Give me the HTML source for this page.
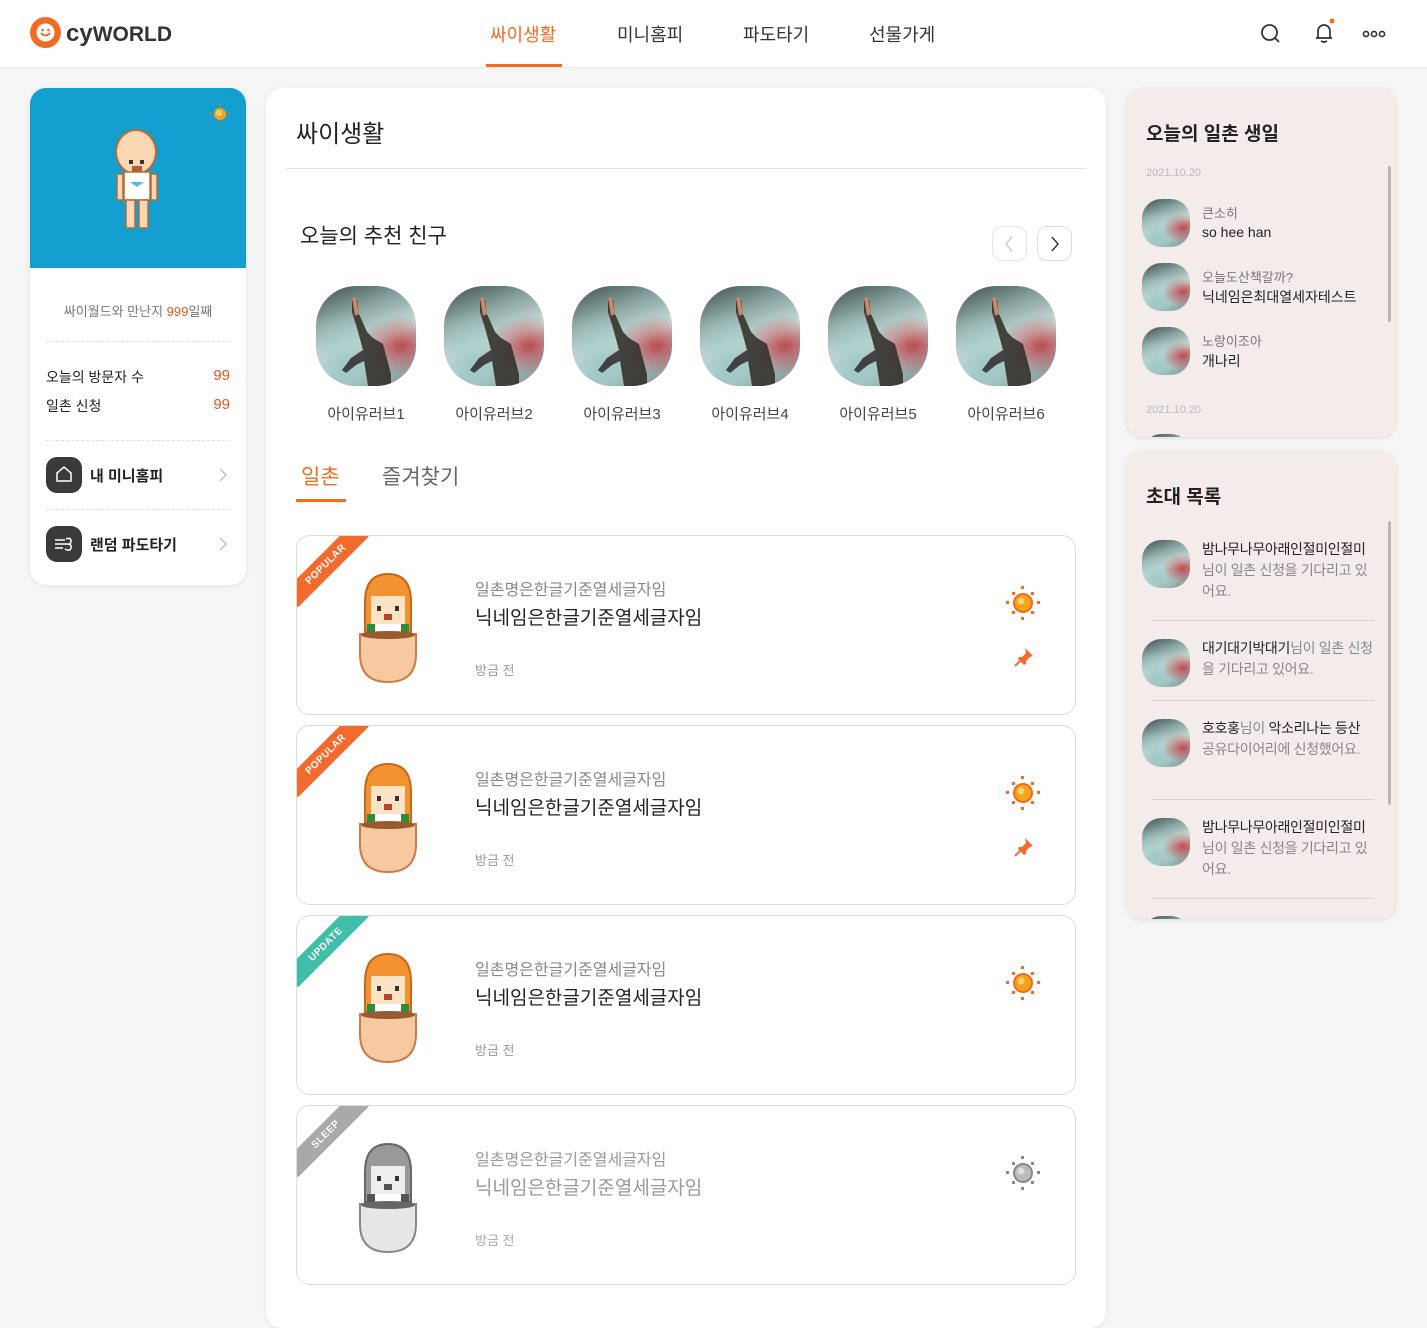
<!DOCTYPE html>
<html><head><meta charset="utf-8">
<style>
*{margin:0;padding:0;box-sizing:border-box}
body{width:1427px;height:1306px;overflow:hidden;background:#f5f5f5;font-family:"Liberation Sans","Noto Sans CJK KR",sans-serif;color:#222;position:relative}
.abs{position:absolute}
.hdr{position:absolute;left:0;top:0;width:1427px;height:68px;background:#fff;border-bottom:1px solid #ececec}
.nav{position:absolute;top:21px;font-size:18px;color:#333}
.card{position:absolute;background:#fff;border-radius:16px;box-shadow:0 1px 4px rgba(0,0,0,.08)}
.av{position:absolute;overflow:hidden;border-radius:40%;background:
 radial-gradient(ellipse at 85% 60%,rgba(190,30,40,.75) 0,rgba(190,30,40,0) 35%),
 radial-gradient(ellipse at 30% 80%,#9fc9c6 0,rgba(0,0,0,0) 50%),
 linear-gradient(160deg,#3d4c4c 0%,#8ea9a6 30%,#cfe1dd 55%,#aec6c2 75%,#6f8a8a 100%)}
.av svg{position:absolute;left:0;top:0;width:100%;height:100%}
.fn{position:absolute;top:403px;font-size:15px;color:#444;width:100px;text-align:center}
.item{position:absolute;left:296px;width:780px;height:180px;background:#fff;border:1px solid #dcdcdc;border-radius:14px;overflow:hidden}
.band{position:absolute;left:-21px;top:18px;width:100px;height:21px;transform:rotate(-45deg);color:#fff;font-size:10px;font-weight:bold;text-align:center;line-height:21px;letter-spacing:.5px}
.sub{position:absolute;left:178px;top:40px;font-size:16px;color:#888}
.ttl{position:absolute;left:178px;top:67px;font-size:19px;color:#222}
.tm{position:absolute;left:178px;top:124px;font-size:13px;color:#999}
.rc{position:absolute;left:1126px;width:270px;background:#f3ecea;border-radius:16px;box-shadow:0 1px 4px rgba(0,0,0,.1);overflow:hidden}
.sa{width:48px;height:48px}
.l1{position:absolute;font-size:13px;color:#777}
.l2{position:absolute;font-size:14px;color:#222}
.inv{position:absolute;left:76px;width:172px;font-size:14px;line-height:21px;color:#888;word-break:break-all;letter-spacing:-0.3px}
.inv b{font-weight:normal;color:#222}
.sep{position:absolute;left:26px;width:222px;height:1px;background:#d6d0ce}
.dash{position:absolute;left:16px;width:184px;border-top:1px dashed #ddd}
</style></head><body>

<div class="hdr">
 <svg class="abs" style="left:30px;top:17px" width="31" height="31" viewBox="0 0 31 31"><circle cx="15.5" cy="15.5" r="15.5" fill="#f26b21"/><circle cx="15.5" cy="15.5" r="9" fill="#fff"/><path d="M11 16q4.5 5 9 0" stroke="#f26b21" stroke-width="2" fill="none"/><circle cx="12.5" cy="13" r="1.3" fill="#f26b21"/><circle cx="18.5" cy="13" r="1.3" fill="#f26b21"/></svg>
 <div class="abs" style="left:66px;top:18px;font-size:24px;font-weight:bold;color:#333;line-height:32px">cy<span style="font-size:21px">WORLD</span></div>
 <div class="nav" style="left:490px;color:#f26b21">싸이생활</div>
 <div class="abs" style="left:486px;top:64px;width:76px;height:3px;background:#f26b21"></div>
 <div class="nav" style="left:617px">미니홈피</div>
 <div class="nav" style="left:743px">파도타기</div>
 <div class="nav" style="left:869px">선물가게</div>
 <svg class="abs" style="left:1259px;top:22px" width="24" height="24" viewBox="0 0 24 24" fill="none" stroke="#333" stroke-width="1.8"><circle cx="10.5" cy="10.5" r="7.5"/><path d="M16 16l4 4"/></svg>
 <svg class="abs" style="left:1310px;top:18px" width="28" height="28" viewBox="0 0 28 28" fill="none" stroke="#333" stroke-width="1.7"><path d="M6 20h16M8 20v-7a6 6 0 0112 0v7M11 23q3 2 6 0"/><circle cx="22" cy="3" r="2.5" fill="#f26b21" stroke="none"/></svg>
 <svg class="abs" style="left:1362px;top:30px" width="24" height="8" viewBox="0 0 24 8" fill="none" stroke="#333" stroke-width="1.6"><circle cx="4" cy="4" r="2.6"/><circle cx="12" cy="4" r="2.6"/><circle cx="20" cy="4" r="2.6"/></svg>
</div>

<!-- left card -->
<div class="card" style="left:30px;top:88px;width:216px;height:497px;overflow:hidden">
 <div class="abs" style="left:0;top:0;width:216px;height:180px;background:#139fcf"></div>
 <svg class="abs" style="left:180px;top:16px" width="20" height="20" viewBox="0 0 20 20"><rect x="9" y="0" width="2" height="2" fill="#f26b21"/><rect x="9" y="18" width="2" height="2" fill="#f26b21"/><rect x="0" y="9" width="2" height="2" fill="#f26b21"/><rect x="18" y="9" width="2" height="2" fill="#f26b21"/><circle cx="10" cy="10" r="6" fill="#f7a21b"/><circle cx="9" cy="9" r="3" fill="#fcd36b"/></svg>
 <svg class="abs" style="left:84px;top:40px" width="46" height="104" viewBox="0 0 46 104">
  <ellipse cx="22" cy="24" rx="20" ry="22" fill="#fcd7b3" stroke="#b56a3a" stroke-width="2"/>
  <rect x="15" y="32" width="4" height="4" fill="#333"/><rect x="26" y="32" width="4" height="4" fill="#333"/>
  <rect x="18" y="38" width="10" height="6" fill="#b55a3a"/>
  <rect x="10" y="44" width="26" height="28" fill="#fff" stroke="#b56a3a" stroke-width="1.5"/>
  <path d="M16 54h14l-7 5z" fill="#5bb6e6"/>
  <rect x="3" y="46" width="6" height="26" fill="#fcd7b3" stroke="#b56a3a" stroke-width="1.5"/>
  <rect x="37" y="46" width="6" height="26" fill="#fcd7b3" stroke="#b56a3a" stroke-width="1.5"/>
  <rect x="12" y="72" width="9" height="28" fill="#fcd7b3" stroke="#b56a3a" stroke-width="1.5"/>
  <rect x="25" y="72" width="9" height="28" fill="#fcd7b3" stroke="#b56a3a" stroke-width="1.5"/>
 </svg>
 <div class="abs" style="left:0;top:213px;width:216px;text-align:center;font-size:13px;color:#777">싸이월드와 만난지 <span style="color:#e8531c">999</span>일째</div>
 <div class="dash" style="top:253px"></div>
 <div class="abs" style="left:16px;top:279px;font-size:14px;color:#222">오늘의 방문자 수</div>
 <div class="abs" style="right:16px;top:279px;font-size:15px;color:#e8531c">99</div>
 <div class="abs" style="left:16px;top:308px;font-size:14px;color:#222">일촌 신청</div>
 <div class="abs" style="right:16px;top:308px;font-size:15px;color:#e8531c">99</div>
 <div class="dash" style="top:352px"></div>
 <div class="abs" style="left:16px;top:369px;width:36px;height:36px;border-radius:11px;background:#3a3a3a"></div>
 <svg class="abs" style="left:24px;top:376px" width="20" height="20" viewBox="0 0 20 20" fill="none" stroke="#fff" stroke-width="1.5"><path d="M3 9l7-6 7 6v8H3z" stroke-linejoin="round"/></svg>
 <div class="abs" style="left:60px;top:377px;font-size:15px;font-weight:bold;color:#222">내 미니홈피</div>
 <svg class="abs" style="left:188px;top:379px" width="10" height="16" viewBox="0 0 10 16" fill="none" stroke="#bbb" stroke-width="1.3"><path d="M2 2l6 6-6 6"/></svg>
 <div class="dash" style="top:421px"></div>
 <div class="abs" style="left:16px;top:438px;width:36px;height:36px;border-radius:11px;background:#3a3a3a"></div>
 <svg class="abs" style="left:23px;top:446px" width="22" height="20" viewBox="0 0 22 20" fill="none" stroke="#fff" stroke-width="1.5"><path d="M2 6h10M2 10h12M2 14h8M13 5q5-2 5 2t-4 3q5 0 4 4t-6 1"/></svg>
 <div class="abs" style="left:60px;top:446px;font-size:15px;font-weight:bold;color:#222">랜덤 파도타기</div>
 <svg class="abs" style="left:188px;top:448px" width="10" height="16" viewBox="0 0 10 16" fill="none" stroke="#bbb" stroke-width="1.3"><path d="M2 2l6 6-6 6"/></svg>
</div>

<!-- middle -->
<div class="card" style="left:266px;top:88px;width:840px;height:1240px"></div>
<div class="abs" style="left:296px;top:114px;font-size:24px;color:#222">싸이생활</div>
<div class="abs" style="left:286px;top:168px;width:800px;height:1px;background:#e2e2e2"></div>
<div class="abs" style="left:300px;top:220px;font-size:21px;color:#222">오늘의 추천 친구</div>
<div class="abs" style="left:992px;top:226px;width:35px;height:35px;border:1px solid #e5e5e5;border-radius:10px"></div>
<svg class="abs" style="left:1003px;top:236px" width="12" height="16" viewBox="0 0 12 16" fill="none" stroke="#ccc" stroke-width="1.4"><path d="M9 1L3 8l6 7"/></svg>
<div class="abs" style="left:1037px;top:226px;width:35px;height:35px;border:1px solid #ddd;border-radius:10px"></div>
<svg class="abs" style="left:1049px;top:236px" width="12" height="16" viewBox="0 0 12 16" fill="none" stroke="#333" stroke-width="1.4"><path d="M3 1l6 7-6 7"/></svg>

<div class="av" style="left:316px;top:286px;width:100px;height:100px"><svg viewBox="0 0 100 100"><path d="M36 12l5 2 2 14 8 18 6 6 10 6 8 30 0 12H52l-4-25-8 4-10 8-4-3 9-12 12-8-6-22-5-16z" fill="#2f2a26" opacity=".85"/><path d="M36 12l4 0 3 16-4 2z" fill="#c9886a"/></svg></div>
<div class="av" style="left:444px;top:286px;width:100px;height:100px"><svg viewBox="0 0 100 100"><path d="M36 12l5 2 2 14 8 18 6 6 10 6 8 30 0 12H52l-4-25-8 4-10 8-4-3 9-12 12-8-6-22-5-16z" fill="#2f2a26" opacity=".85"/><path d="M36 12l4 0 3 16-4 2z" fill="#c9886a"/></svg></div>
<div class="av" style="left:572px;top:286px;width:100px;height:100px"><svg viewBox="0 0 100 100"><path d="M36 12l5 2 2 14 8 18 6 6 10 6 8 30 0 12H52l-4-25-8 4-10 8-4-3 9-12 12-8-6-22-5-16z" fill="#2f2a26" opacity=".85"/><path d="M36 12l4 0 3 16-4 2z" fill="#c9886a"/></svg></div>
<div class="av" style="left:700px;top:286px;width:100px;height:100px"><svg viewBox="0 0 100 100"><path d="M36 12l5 2 2 14 8 18 6 6 10 6 8 30 0 12H52l-4-25-8 4-10 8-4-3 9-12 12-8-6-22-5-16z" fill="#2f2a26" opacity=".85"/><path d="M36 12l4 0 3 16-4 2z" fill="#c9886a"/></svg></div>
<div class="av" style="left:828px;top:286px;width:100px;height:100px"><svg viewBox="0 0 100 100"><path d="M36 12l5 2 2 14 8 18 6 6 10 6 8 30 0 12H52l-4-25-8 4-10 8-4-3 9-12 12-8-6-22-5-16z" fill="#2f2a26" opacity=".85"/><path d="M36 12l4 0 3 16-4 2z" fill="#c9886a"/></svg></div>
<div class="av" style="left:956px;top:286px;width:100px;height:100px"><svg viewBox="0 0 100 100"><path d="M36 12l5 2 2 14 8 18 6 6 10 6 8 30 0 12H52l-4-25-8 4-10 8-4-3 9-12 12-8-6-22-5-16z" fill="#2f2a26" opacity=".85"/><path d="M36 12l4 0 3 16-4 2z" fill="#c9886a"/></svg></div>
<div class="fn" style="left:316px">아이유러브1</div>
<div class="fn" style="left:444px">아이유러브2</div>
<div class="fn" style="left:572px">아이유러브3</div>
<div class="fn" style="left:700px">아이유러브4</div>
<div class="fn" style="left:828px">아이유러브5</div>
<div class="fn" style="left:956px">아이유러브6</div>

<div class="abs" style="left:301px;top:461px;font-size:21px;color:#f26b21">일촌</div>
<div class="abs" style="left:296px;top:499px;width:50px;height:3px;background:#f26b21"></div>
<div class="abs" style="left:382px;top:461px;font-size:21px;color:#666">즐겨찾기</div>

<!-- items -->
<div class="item" style="top:535px">
 <div class="band" style="background:#f26b2d">POPULAR</div>
 <svg class="abs" style="left:60px;top:36px" width="62" height="112" viewBox="0 0 62 112"><path d="M8 30q0-28 23-28t23 28v30H8z" fill="#f39231" stroke="#c9661e" stroke-width="2"/><rect x="14" y="24" width="34" height="30" fill="#fde3c6"/><rect x="20" y="34" width="4" height="5" fill="#333"/><rect x="38" y="34" width="4" height="5" fill="#333"/><rect x="27" y="42" width="8" height="6" fill="#b5452a"/><rect x="10" y="52" width="42" height="14" fill="#2e8b3a"/><rect x="18" y="52" width="26" height="14" fill="#fff"/><path d="M3 62h56v20q0 28-28 28T3 82z" fill="#f7c9a0" stroke="#d07a4a" stroke-width="2"/><ellipse cx="31" cy="63" rx="27" ry="4" fill="#9a5a30"/></svg>
 <div class="sub">일촌명은한글기준열세글자임</div><div class="ttl">닉네임은한글기준열세글자임</div><div class="tm">방금 전</div>
 <svg class="abs" style="left:708px;top:49px" width="36" height="36" viewBox="0 0 36 36"><rect x="16" y="1" width="3" height="3" fill="#f26b21"/><rect x="16" y="32" width="3" height="3" fill="#f26b21"/><rect x="1" y="16" width="3" height="3" fill="#f26b21"/><rect x="32" y="16" width="3" height="3" fill="#f26b21"/><rect x="7" y="7" width="3" height="3" fill="#f26b21"/><rect x="26" y="7" width="3" height="3" fill="#f26b21"/><rect x="7" y="26" width="3" height="3" fill="#f26b21"/><rect x="26" y="26" width="3" height="3" fill="#f26b21"/><circle cx="18" cy="18" r="9" fill="#f7a21b" stroke="#f26b21" stroke-width="2"/><circle cx="16" cy="16" r="3.5" fill="#fcd36b"/></svg>
 <svg class="abs" style="left:716px;top:110px" width="22" height="22" viewBox="0 0 22 22"><path d="M12 2l8 8-3 1-4 4 0 3-2 1-6-6 1-2 3 0 4-4z" fill="#f26b2d"/><path d="M7 15l-5 5" stroke="#f26b2d" stroke-width="2"/></svg>
</div>
<div class="item" style="top:725px">
 <div class="band" style="background:#f26b2d">POPULAR</div>
 <svg class="abs" style="left:60px;top:36px" width="62" height="112" viewBox="0 0 62 112"><path d="M8 30q0-28 23-28t23 28v30H8z" fill="#f39231" stroke="#c9661e" stroke-width="2"/><rect x="14" y="24" width="34" height="30" fill="#fde3c6"/><rect x="20" y="34" width="4" height="5" fill="#333"/><rect x="38" y="34" width="4" height="5" fill="#333"/><rect x="27" y="42" width="8" height="6" fill="#b5452a"/><rect x="10" y="52" width="42" height="14" fill="#2e8b3a"/><rect x="18" y="52" width="26" height="14" fill="#fff"/><path d="M3 62h56v20q0 28-28 28T3 82z" fill="#f7c9a0" stroke="#d07a4a" stroke-width="2"/><ellipse cx="31" cy="63" rx="27" ry="4" fill="#9a5a30"/></svg>
 <div class="sub">일촌명은한글기준열세글자임</div><div class="ttl">닉네임은한글기준열세글자임</div><div class="tm">방금 전</div>
 <svg class="abs" style="left:708px;top:49px" width="36" height="36" viewBox="0 0 36 36"><rect x="16" y="1" width="3" height="3" fill="#f26b21"/><rect x="16" y="32" width="3" height="3" fill="#f26b21"/><rect x="1" y="16" width="3" height="3" fill="#f26b21"/><rect x="32" y="16" width="3" height="3" fill="#f26b21"/><rect x="7" y="7" width="3" height="3" fill="#f26b21"/><rect x="26" y="7" width="3" height="3" fill="#f26b21"/><rect x="7" y="26" width="3" height="3" fill="#f26b21"/><rect x="26" y="26" width="3" height="3" fill="#f26b21"/><circle cx="18" cy="18" r="9" fill="#f7a21b" stroke="#f26b21" stroke-width="2"/><circle cx="16" cy="16" r="3.5" fill="#fcd36b"/></svg>
 <svg class="abs" style="left:716px;top:110px" width="22" height="22" viewBox="0 0 22 22"><path d="M12 2l8 8-3 1-4 4 0 3-2 1-6-6 1-2 3 0 4-4z" fill="#f26b2d"/><path d="M7 15l-5 5" stroke="#f26b2d" stroke-width="2"/></svg>
</div>
<div class="item" style="top:915px">
 <div class="band" style="background:#3fbfa8">UPDATE</div>
 <svg class="abs" style="left:60px;top:36px" width="62" height="112" viewBox="0 0 62 112"><path d="M8 30q0-28 23-28t23 28v30H8z" fill="#f39231" stroke="#c9661e" stroke-width="2"/><rect x="14" y="24" width="34" height="30" fill="#fde3c6"/><rect x="20" y="34" width="4" height="5" fill="#333"/><rect x="38" y="34" width="4" height="5" fill="#333"/><rect x="27" y="42" width="8" height="6" fill="#b5452a"/><rect x="10" y="52" width="42" height="14" fill="#2e8b3a"/><rect x="18" y="52" width="26" height="14" fill="#fff"/><path d="M3 62h56v20q0 28-28 28T3 82z" fill="#f7c9a0" stroke="#d07a4a" stroke-width="2"/><ellipse cx="31" cy="63" rx="27" ry="4" fill="#9a5a30"/></svg>
 <div class="sub">일촌명은한글기준열세글자임</div><div class="ttl">닉네임은한글기준열세글자임</div><div class="tm">방금 전</div>
 <svg class="abs" style="left:708px;top:49px" width="36" height="36" viewBox="0 0 36 36"><rect x="16" y="1" width="3" height="3" fill="#f26b21"/><rect x="16" y="32" width="3" height="3" fill="#f26b21"/><rect x="1" y="16" width="3" height="3" fill="#f26b21"/><rect x="32" y="16" width="3" height="3" fill="#f26b21"/><rect x="7" y="7" width="3" height="3" fill="#f26b21"/><rect x="26" y="7" width="3" height="3" fill="#f26b21"/><rect x="7" y="26" width="3" height="3" fill="#f26b21"/><rect x="26" y="26" width="3" height="3" fill="#f26b21"/><circle cx="18" cy="18" r="9" fill="#f7a21b" stroke="#f26b21" stroke-width="2"/><circle cx="16" cy="16" r="3.5" fill="#fcd36b"/></svg>
</div>
<div class="item" style="top:1105px">
 <div class="band" style="background:#a9a9a9">SLEEP</div>
 <svg class="abs" style="left:60px;top:36px" width="62" height="112" viewBox="0 0 62 112"><path d="M8 30q0-28 23-28t23 28v30H8z" fill="#999" stroke="#666" stroke-width="2"/><rect x="14" y="24" width="34" height="30" fill="#eee"/><rect x="20" y="34" width="4" height="5" fill="#333"/><rect x="38" y="34" width="4" height="5" fill="#333"/><rect x="27" y="42" width="8" height="6" fill="#555"/><rect x="10" y="52" width="42" height="14" fill="#555"/><rect x="18" y="52" width="26" height="14" fill="#fff"/><path d="M3 62h56v20q0 28-28 28T3 82z" fill="#e6e6e6" stroke="#888" stroke-width="2"/><ellipse cx="31" cy="63" rx="27" ry="4" fill="#666"/></svg>
 <div class="sub" style="color:#999">일촌명은한글기준열세글자임</div><div class="ttl" style="color:#999">닉네임은한글기준열세글자임</div><div class="tm" style="color:#aaa">방금 전</div>
 <svg class="abs" style="left:708px;top:49px" width="36" height="36" viewBox="0 0 36 36"><rect x="16" y="1" width="3" height="3" fill="#888"/><rect x="16" y="32" width="3" height="3" fill="#888"/><rect x="1" y="16" width="3" height="3" fill="#888"/><rect x="32" y="16" width="3" height="3" fill="#888"/><rect x="7" y="7" width="3" height="3" fill="#888"/><rect x="26" y="7" width="3" height="3" fill="#888"/><rect x="7" y="26" width="3" height="3" fill="#888"/><rect x="26" y="26" width="3" height="3" fill="#888"/><circle cx="18" cy="18" r="9" fill="#bbb" stroke="#888" stroke-width="2"/><circle cx="16" cy="16" r="3.5" fill="#ddd"/></svg>
</div>

<!-- right card 1 -->
<div class="rc" style="top:88px;height:349px">
 <div class="abs" style="left:20px;top:31px;font-size:19px;font-weight:bold;color:#222">오늘의 일촌 생일</div>
 <div class="abs" style="left:20px;top:79px;font-size:11px;color:#bbb">2021.10.20</div>
 <div class="av sa" style="left:16px;top:111px"></div>
 <div class="l1" style="left:76px;top:115px">큰소히</div><div class="l2" style="left:76px;top:136px">so hee han</div>
 <div class="av sa" style="left:16px;top:175px"></div>
 <div class="l1" style="left:76px;top:179px">오늘도산책갈까?</div><div class="l2" style="left:76px;top:199px">닉네임은최대열세자테스트</div>
 <div class="av sa" style="left:16px;top:239px"></div>
 <div class="l1" style="left:76px;top:243px">노랑이조아</div><div class="l2" style="left:76px;top:263px">개나리</div>
 <div class="abs" style="left:20px;top:316px;font-size:11px;color:#bbb">2021.10.20</div>
 <div class="av sa" style="left:16px;top:346px"></div>
 <div class="abs" style="left:262px;top:78px;width:3px;height:156px;border-radius:2px;background:#bdb6b4"></div>
</div>

<!-- right card 2 -->
<div class="rc" style="top:451px;height:468px">
 <div class="abs" style="left:20px;top:31px;font-size:19px;font-weight:bold;color:#222">초대 목록</div>
 <div class="av sa" style="left:16px;top:89px"></div>
 <div class="inv" style="top:88px"><b>밤나무나무아래인절미인절미</b>님이 일촌 신청을 기다리고 있어요.</div>
 <div class="sep" style="top:169px"></div>
 <div class="av sa" style="left:16px;top:188px"></div>
 <div class="inv" style="top:187px"><b>대기대기박대기</b>님이 일촌 신청을 기다리고 있어요.</div>
 <div class="sep" style="top:249px"></div>
 <div class="av sa" style="left:16px;top:268px"></div>
 <div class="inv" style="top:267px"><b>호호홍</b>님이 <b>악소리나는 등산</b> 공유다이어리에 신청했어요.</div>
 <div class="sep" style="top:348px"></div>
 <div class="av sa" style="left:16px;top:367px"></div>
 <div class="inv" style="top:366px"><b>밤나무나무아래인절미인절미</b>님이 일촌 신청을 기다리고 있어요.</div>
 <div class="sep" style="top:447px"></div>
 <div class="av sa" style="left:16px;top:465px"></div>
 <div class="abs" style="left:262px;top:70px;width:3px;height:284px;border-radius:2px;background:#bdb6b4"></div>
</div>

</body></html>
